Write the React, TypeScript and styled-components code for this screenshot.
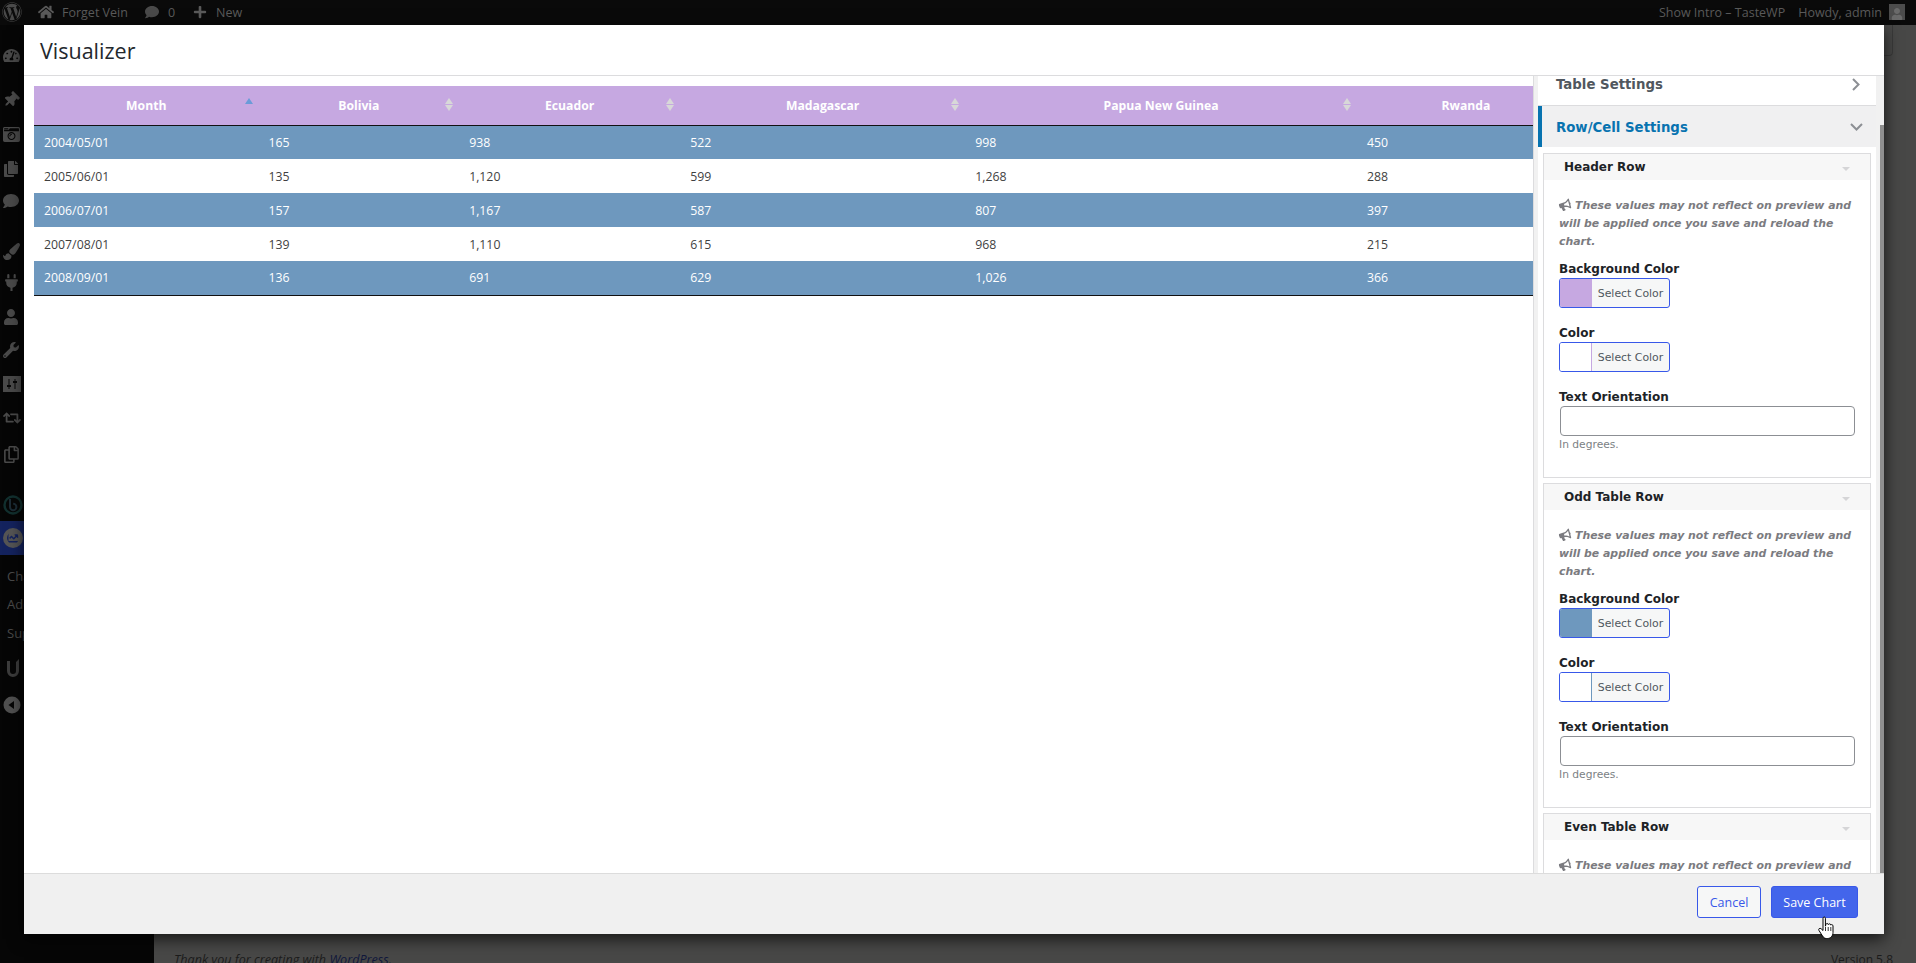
import React from "react";
import styled, { createGlobalStyle } from "styled-components";
import {
  FaWordpress, FaHome, FaComment, FaPlus, FaTachometerAlt, FaThumbtack, FaCopy,
  FaPaintBrush, FaPlug, FaUser, FaWrench, FaRetweet, FaRegCopy, FaChartLine,
  FaBullhorn, FaCameraRetro,
} from "react-icons/fa";

const Global = createGlobalStyle`
  html, body { margin: 0; padding: 0; height: 100%; overflow: hidden; background: #484848; }
  * { box-sizing: border-box; }
  #root { height: 100%; }
`;

const Page = styled.div`
  width: 1916px; height: 963px; position: relative; overflow: hidden;
  display: flex; flex-direction: column; background: #484847;
  font-family: "Open Sans", "Noto Sans", sans-serif;
`;
const TopBar = styled.div`
  height: 25px; flex: none; background: #0a0a0a; color: #5b5b5b; font-size: 12.5px;
  display: flex; align-items: center; justify-content: space-between; padding: 0 11px 1px 2px;
`;
const BarGroup = styled.div`display: flex; align-items: center;`;
const BarItem = styled.span`display: inline-flex; align-items: center; gap: ${p => p.$gap ?? 0}px; margin-left: ${p => p.$ml ?? 0}px; color: #5a5a5a; white-space: nowrap;`;
const Avatar = styled.span`
  width: 16px; height: 16px; background: #4c4c4c; display: inline-flex; align-items: flex-end; justify-content: center;
  color: #6a6a6a; overflow: hidden; margin-left: 7px;
`;
const Main = styled.div`flex: 1; display: flex; min-height: 0;`;
const Side = styled.nav`
  width: 154px; flex: none; background: #060606; padding-top: 13px; display: flex; flex-direction: column; color: #505050;
`;
const MenuItem = styled.div`
  height: ${p => p.$h ?? 34}px; flex: none; margin-top: ${p => p.$mt ?? 0}px; padding-left: ${p => p.$pl ?? 3}px;
  display: flex; align-items: center; color: #4a4a4a;
  background: ${p => (p.$active ? "#14235e" : "transparent")};
  font-size: 13px; white-space: nowrap;
`;
const PinIcon = styled(FaThumbtack)`transform: rotate(45deg);`;
const Content = styled.div`flex: 1; display: flex; flex-direction: column; justify-content: flex-end;`;
const Screen = styled.div`
  position: absolute; right: 23px; top: 25px; width: 24px; height: 31px; border: 1px solid #3a3a3a; border-top: 0; border-radius: 0 0 4px 4px;
`;
const Foot = styled.div`
  display: flex; justify-content: space-between; padding: 0 23px 0 20px; height: 25px; color: #1c1c1c; font-size: 12.6px;
  transform: translateY(13px);
`;
const FootLink = styled.span`color: #10183c;`;
const Thanks = styled.em`font-style: italic;`;
const Version = styled.span`font-size: 12px;`;

const Modal = styled.section`
  position: absolute; left: 24px; top: 25px; width: 1860px; height: 909px; background: #fff;
  box-shadow: 0 5px 15px rgba(0,0,0,.7); display: flex; flex-direction: column;
`;
const ModalHead = styled.header`
  height: 51px; flex: none; border-bottom: 1px solid #dcdcde; padding: 1px 16px 0; display: flex; align-items: center;
`;
const Title = styled.h1`margin: 0; font-size: 21.5px; font-weight: 400; color: #23282d; font-family: "Open Sans", sans-serif;`;
const ModalBody = styled.div`flex: 1; display: flex; min-height: 0;`;
const Preview = styled.div`width: 1509px; flex: none; padding: 10px 0 0 10px; overflow: hidden;`;
const TableClip = styled.div`width: 1500px; overflow: hidden;`;
const DataTable = styled.table`
  width: 1541px; table-layout: fixed; border-collapse: collapse; font-size: 12.3px; color: #3a3a3a;
  border-bottom: 1px solid #111;
`;
const HeadRow = styled.tr`background: #c6a8e1; height: 39px;`;
const Th = styled.th`
  position: relative; color: #fff; font-weight: 700; text-align: center; padding: 0; border-bottom: 1px solid #111; font-size: 12.2px;
`;
const SortBox = styled.span`
  position: absolute; right: 5px; top: 12px; width: 10px; display: flex; flex-direction: column; gap: 1px;
`;
const Tri = styled.i`
  display: block; width: 0; height: 0; border-left: 4px solid transparent; border-right: 4px solid transparent;
  margin: 0 auto;
  ${p => (p.$down ? `border-top: 6px solid ${p.$c};` : `border-bottom: 6px solid ${p.$c};`)}
  ${p => p.$hidden && "visibility: hidden;"}
`;
const Row = styled.tr`
  height: 34px; background: ${p => (p.$odd ? "#6e98be" : "#fff")}; color: ${p => (p.$odd ? "#fff" : "#3f3f3f")};
`;
const Td = styled.td`padding: 0 10px;`;

const Settings = styled.aside`
  flex: 1; min-width: 0; border-left: 1px solid #dcdcde; background: #f1f1f1; display: flex; padding-left: 4px; overflow: hidden;
  position: relative;
  font-family: "DejaVu Sans", Verdana, sans-serif;
`;
const SetInner = styled.div`width: 338px; flex: none; background: #fff; overflow: hidden; display: flex; flex-direction: column;`;
const Thumb = styled.div`
  position: absolute; right: 0; top: 49px; width: 4px; height: 748px; background: #8f8f8f;
`;
const AccClosed = styled.div`
  height: 30px; flex: none; display: flex; align-items: center; justify-content: space-between;
  padding: 0 16px 12px 18px; font-size: 13.3px; font-weight: 700; color: #50575e; background: #fff;
  border-bottom: 1px solid #dcdcde;
`;
const AccOpen = styled.div`
  height: 41px; flex: none; display: flex; align-items: center; justify-content: space-between;
  padding: 1px 13px 0 14px; font-size: 13.3px; font-weight: 700; color: #0873b0; background: #f0f0f1;
  border-left: 4px solid #0873b0;
`;
const Groups = styled.div`padding: 6px 5px 0; display: flex; flex-direction: column; gap: 5px;`;
const Group = styled.div`border: 1px solid #dcdcde; height: 325px; flex: none; background: #fff;`;
const GroupHead = styled.div`
  height: 26px; background: #f7f7f7; padding: 0 20px 1px 20px; display: flex; align-items: center; justify-content: space-between;
  font-size: 12px; font-weight: 700; color: #1d2327;
`;
const Caret = styled.i`
  width: 0; height: 0; border-left: 4px solid transparent; border-right: 4px solid transparent; border-top: 4px solid #d5d5d7; margin-top: 4px;
`;
const GroupBody = styled.div`padding: 17px 12px 0 15px; display: flex; flex-direction: column;`;
const Note = styled.p`
  margin: 0 0 8px; font-size: 10.9px; line-height: 18px; font-style: italic; font-weight: 700; color: #7b7b80; width: 300px;
`;
const NoteIcon = styled(FaBullhorn)`
  width: 12px; height: 12px; margin-right: 4px; vertical-align: -2px; transform: rotate(-15deg);
`;
const Field = styled.div`display: flex; flex-direction: column; margin-bottom: 15px;`;
const Label = styled.label`font-size: 12px; font-weight: 700; color: #1d2327; line-height: 20px; height: 18px; margin-bottom: 1px;`;
const ColorBtn = styled.div`
  width: 111px; height: 30px; border: 1px solid #3858e9; border-radius: 3px; overflow: hidden; display: flex; background: #f6f7f7;
`;
const Swatch = styled.span`
  width: 32px; flex: none; background: ${p => p.$c};
  ${p => p.$line && `border-right: 1px solid ${p.$line};`}
`;
const SelectText = styled.span`
  flex: 1; display: flex; align-items: center; justify-content: center; font-size: 10.9px; color: #50575e;
`;
const TextBox = styled.input`
  display: block; width: 295px; height: 30px; margin-left: 1px; border: 1px solid #8c8f94; border-radius: 4px; background: #fff; padding: 0 8px;
`;
const Hint = styled.span`font-size: 10.7px; color: #7b7f84; line-height: 18px;`;

const ModalFoot = styled.footer`
  height: 61px; flex: none; background: #f0f0f0; border-top: 1px solid #dcdcdc; padding: 0 26px 4px 0;
  display: flex; justify-content: flex-end; align-items: center; gap: 10px;
`;
const Btn = styled.button`
  height: 32px; width: ${p => p.$w}px; border-radius: 3px; font-family: "Open Sans", sans-serif; font-size: 12.5px; padding: 0;
  border: 1px solid #3858e9; background: ${p => (p.$primary ? "#4365eb" : "#f6f7f7")}; color: ${p => (p.$primary ? "#fff" : "#3858e9")};
`;
const Cursor = styled.svg`position: absolute; left: 1817px; top: 916px; width: 20px; height: 24px;`;
const Badge = styled(FaChartLine)`
  background: #555; border-radius: 50%; padding: 4px; width: 20px; height: 20px; color: #14235e;
`;

const widths = [224.5, 200.5, 221, 285, 391.5, 218];
const cols = ["Month", "Bolivia", "Ecuador", "Madagascar", "Papua New Guinea", "Rwanda"];
const rows = [
  ["2004/05/01", "165", "938", "522", "998", "450"],
  ["2005/06/01", "135", "1,120", "599", "1,268", "288"],
  ["2006/07/01", "157", "1,167", "587", "807", "397"],
  ["2007/08/01", "139", "1,110", "615", "968", "215"],
  ["2008/09/01", "136", "691", "629", "1,026", "366"],
];

const NOTE = "These values may not reflect on preview and will be applied once you save and reload the chart.";

function SettingGroup({ title, bg, line }: { title: string; bg: string; line?: string }) {
  return (
    <Group>
      <GroupHead>{title}<Caret /></GroupHead>
      <GroupBody>
        <Note><NoteIcon />{NOTE}</Note>
        <Field>
          <Label>Background Color</Label>
          <ColorBtn><Swatch $c={bg} /><SelectText>Select Color</SelectText></ColorBtn>
        </Field>
        <Field>
          <Label>Color</Label>
          <ColorBtn><Swatch $c="#fff" $line={line} /><SelectText>Select Color</SelectText></ColorBtn>
        </Field>
        <Field>
          <Label>Text Orientation</Label>
          <TextBox readOnly />
          <Hint>In degrees.</Hint>
        </Field>
      </GroupBody>
    </Group>
  );
}

function BLogo() {
  return (
    <svg width="20" height="20" viewBox="0 0 20 20" fill="none">
      <circle cx="10" cy="10" r="8.5" stroke="#12302f" strokeWidth="2.4" />
      <path d="M7 4v8a3.2 3.2 0 1 0 3.2-3.2" stroke="#1c2c36" strokeWidth="2" />
    </svg>
  );
}
function ULogo() {
  return (
    <svg width="20" height="22" viewBox="0 0 20 22" fill="none">
      <path d="M4 3v10a6 6 0 0 0 12 0V1l-3 3v9a3 3 0 0 1-6 0V3z" fill="#3c3c3c" />
    </svg>
  );
}
function SettingsIcon() {
  return (
    <svg width="18" height="16" viewBox="0 0 18 16">
      <rect width="18" height="16" fill="#4a4a4a" />
      <path d="M6 3v10M12 3v10" stroke="#060606" strokeWidth="1" />
      <path d="M4 10h4M10 6h4" stroke="#060606" strokeWidth="2" />
    </svg>
  );
}
function CollapseIcon() {
  return (
    <svg width="18" height="18" viewBox="0 0 18 18">
      <circle cx="9" cy="9" r="8.500" fill="#505050" />
      <path d="M11 5v8L5.500 9z" fill="#060606" />
    </svg>
  );
}
function ChevronRight() {
  return (
    <svg width="8" height="13" viewBox="0 0 8 13" fill="none">
      <path d="M1 1l5.500 5.500L1 12" stroke="#8c8f94" strokeWidth="2" />
    </svg>
  );
}
function ChevronDown() {
  return (
    <svg width="13" height="8" viewBox="0 0 13 8" fill="none">
      <path d="M1 1l5.500 5.500L12 1" stroke="#8c8f94" strokeWidth="2" />
    </svg>
  );
}

export default function App() {
  return (
    <Page>
      <Global />
      <TopBar>
        <BarGroup>
          <FaWordpress size={20} color="#4a4a4a" />
          <BarItem $ml={16} $gap={8}><FaHome size={16} color="#5a5a5a" />Forget Vein</BarItem>
          <BarItem $ml={17} $gap={9}><FaComment size={14} color="#4a4a4a" />0</BarItem>
          <BarItem $ml={18} $gap={9}><FaPlus size={14} color="#5a5a5a" />New</BarItem>
        </BarGroup>
        <BarGroup>
          <BarItem>Show Intro – TasteWP</BarItem>
          <BarItem $ml={13}>Howdy, admin</BarItem>
          <Avatar><FaUser size={12} /></Avatar>
        </BarGroup>
      </TopBar>
      <Main>
        <Side>
          <MenuItem><FaTachometerAlt size={17} /></MenuItem>
          <MenuItem $mt={11}><PinIcon size={16} /></MenuItem>
          <MenuItem><FaCameraRetro size={17} /></MenuItem>
          <MenuItem $mt={1}><FaCopy size={16} /></MenuItem>
          <MenuItem $mt={-2}><FaComment size={16} /></MenuItem>
          <MenuItem $mt={16}><FaPaintBrush size={17} /></MenuItem>
          <MenuItem $mt={-3}><FaPlug size={17} /></MenuItem>
          <MenuItem $mt={1}><FaUser size={16} /></MenuItem>
          <MenuItem $mt={-1}><FaWrench size={16} /></MenuItem>
          <MenuItem><SettingsIcon /></MenuItem>
          <MenuItem><FaRetweet size={18} /></MenuItem>
          <MenuItem $mt={2}><FaRegCopy size={17} /></MenuItem>
          <MenuItem $mt={17}><BLogo /></MenuItem>
          <MenuItem $active $mt={-1}><Badge /></MenuItem>
          <MenuItem $h={28} $mt={7} $pl={7}>Chart Library</MenuItem>
          <MenuItem $h={28} $pl={7}>Add New Chart</MenuItem>
          <MenuItem $h={28} $mt={1} $pl={7}>Support</MenuItem>
          <MenuItem $mt={5}><ULogo /></MenuItem>
          <MenuItem $mt={2}><CollapseIcon /></MenuItem>
        </Side>
        <Content>
          <Foot>
            <Thanks>Thank you for creating with <FootLink>WordPress</FootLink>.</Thanks>
            <Version>Version 5.8</Version>
          </Foot>
        </Content>
      </Main>
      <Screen />
      <Modal>
        <ModalHead><Title>Visualizer</Title></ModalHead>
        <ModalBody>
          <Preview>
            <TableClip>
              <DataTable>
                <colgroup>{widths.map((w, i) => <col key={i} style={{ width: w }} />)}</colgroup>
                <thead>
                  <HeadRow>
                    {cols.map((c, i) => (
                      <Th key={c}>
                        {c}
                        {i < 5 && (
                          <SortBox>
                            <Tri $c={i === 0 ? "#6b9bd8" : "#d8d8d8"} />
                            <Tri $down $c="#d8d8d8" $hidden={i === 0} />
                          </SortBox>
                        )}
                      </Th>
                    ))}
                  </HeadRow>
                </thead>
                <tbody>
                  {rows.map((r, i) => (
                    <Row key={r[0]} $odd={i % 2 === 0}>
                      {r.map((v, j) => <Td key={j}>{v}</Td>)}
                    </Row>
                  ))}
                </tbody>
              </DataTable>
            </TableClip>
          </Preview>
          <Settings>
            <SetInner>
              <AccClosed>Table Settings<ChevronRight /></AccClosed>
              <AccOpen>Row/Cell Settings<ChevronDown /></AccOpen>
              <Groups>
                <SettingGroup title="Header Row" bg="#c6a8e1" line="#c6a8e1" />
                <SettingGroup title="Odd Table Row" bg="#6e98be" line="#6e98be" />
                <SettingGroup title="Even Table Row" bg="#fff" line="#ddd" />
              </Groups>
            </SetInner>
            <Thumb />
          </Settings>
        </ModalBody>
        <ModalFoot>
          <Btn $w={64}>Cancel</Btn>
          <Btn $primary $w={87}>Save Chart</Btn>
        </ModalFoot>
      </Modal>
      <Cursor viewBox="0 0 20 24">
        <path d="M6 2.200c0-1.600 2.400-1.600 2.400 0v8l.6-2c.6-1.200 2.200-.9 2.200.4l.3-.2c.7-1 2.200-.6 2.200.6.900-.8 2.300-.3 2.300 1v6.500c0 3.400-2.300 6-5.500 6H9.500c-2 0-3-1-4-2.500L2 14.500c-1-1.500.8-3 2.200-1.700L6 14.500z" fill="#fff" stroke="#000" strokeWidth="1" strokeLinejoin="round" />
        <path d="M8.500 11v4M11.200 11v4M13.800 11v4" stroke="#000" strokeWidth=".8" />
      </Cursor>
    </Page>
  );
}
